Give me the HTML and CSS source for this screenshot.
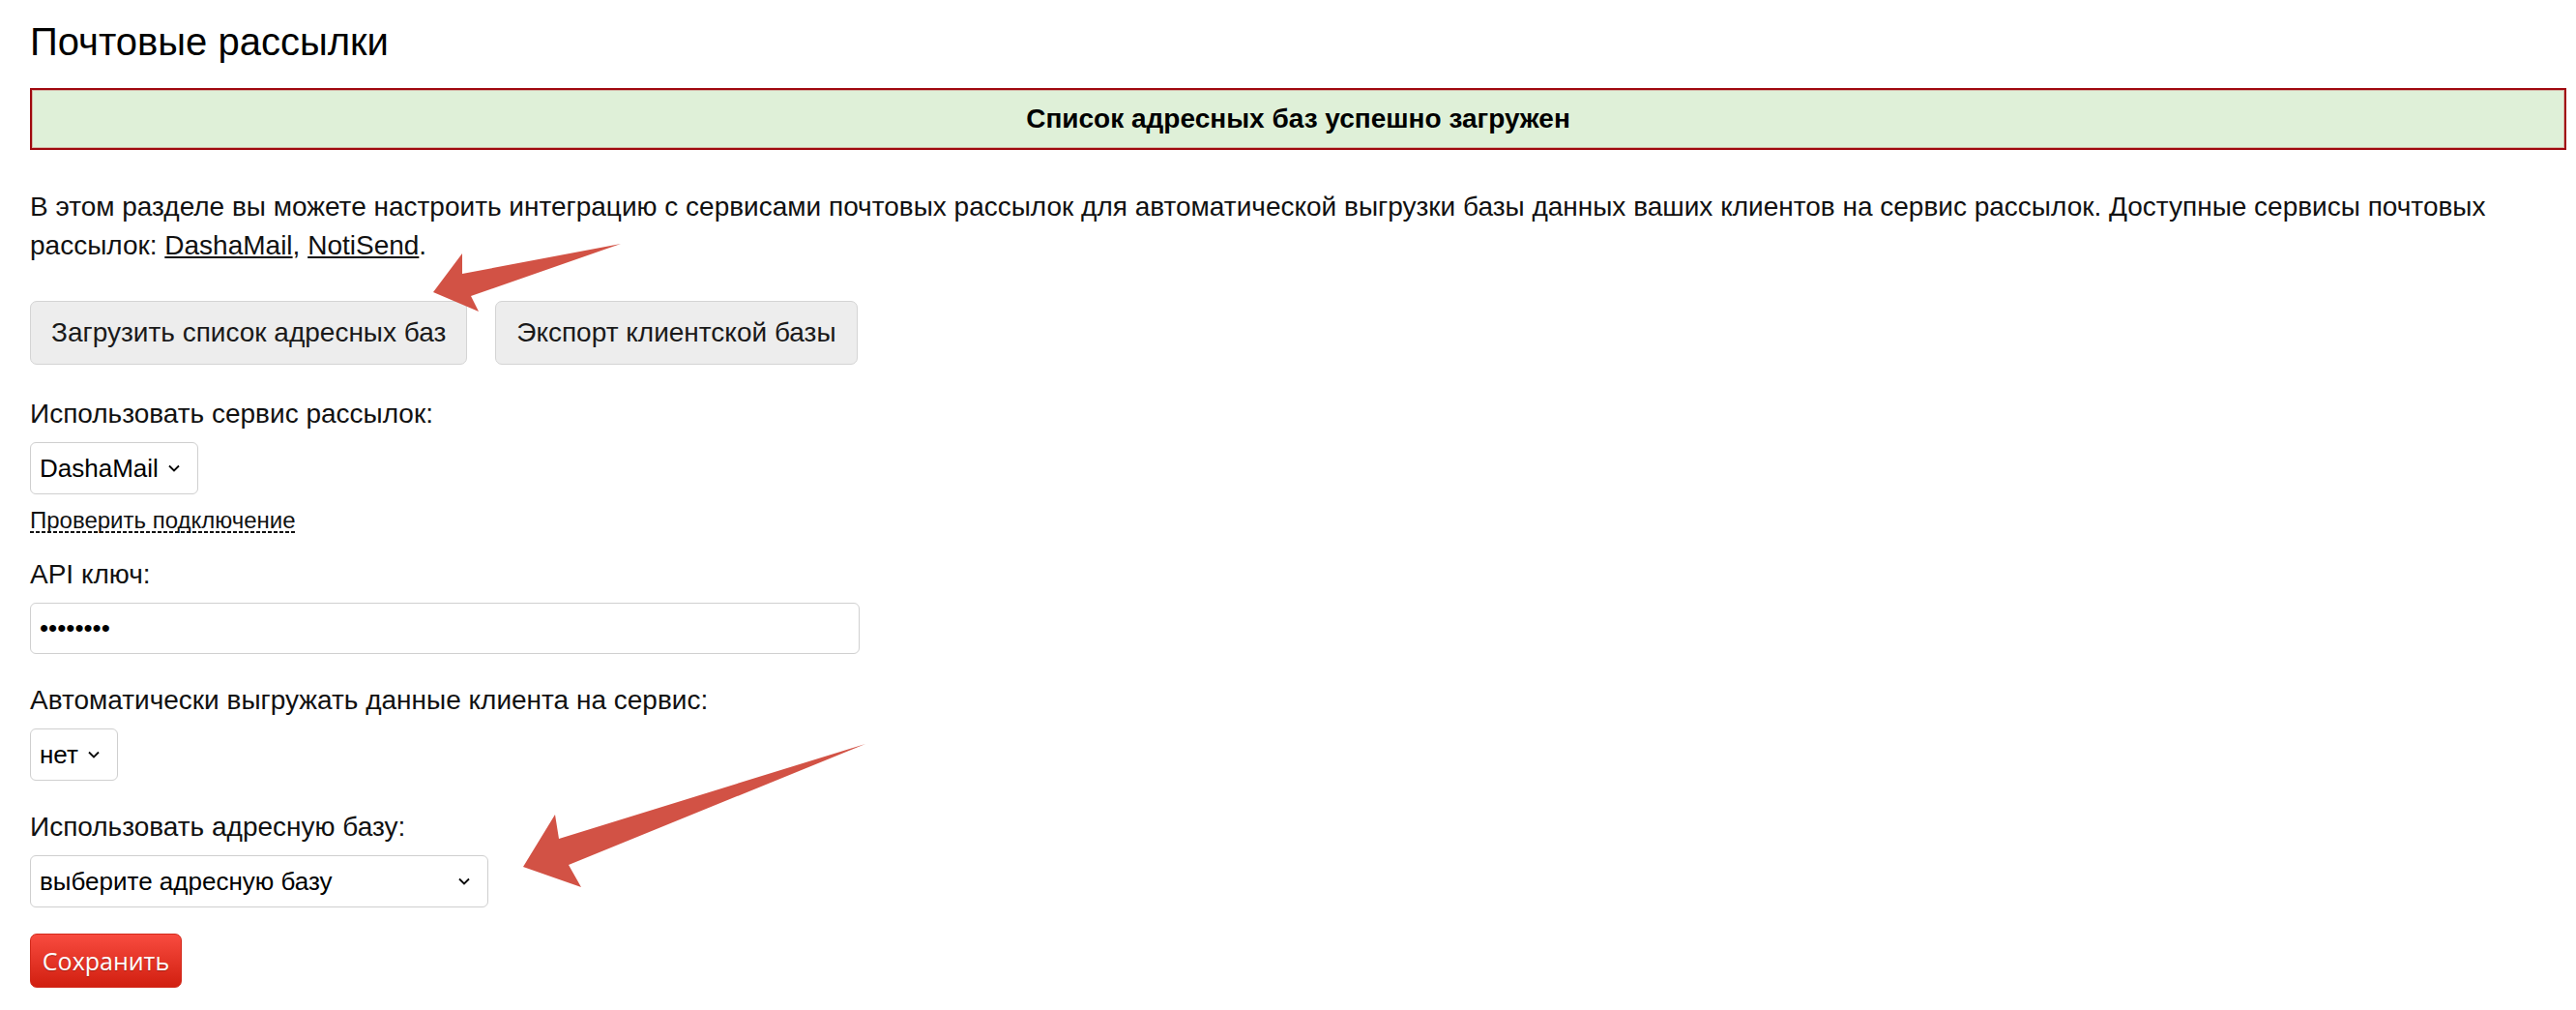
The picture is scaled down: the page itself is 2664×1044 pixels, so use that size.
FILE: index.html
```html
<!DOCTYPE html>
<html lang="ru">
  <head>
    <meta charset="UTF-8" />
    <meta name="viewport" content="width=device-width, initial-scale=1.0" />
    <title>Почтовые рассылки</title>
    <link rel="stylesheet" href="styles.css">
  </head>
  <body>
    <div class="page">
      <h1>Почтовые рассылки</h1>

      <!-- Status message -->
      <div class="notice">Список адресных баз успешно загружен</div>

      <p class="intro">
        В этом разделе вы можете настроить интеграцию с сервисами почтовых рассылок для автоматической выгрузки базы данных ваших клиентов на сервис рассылок. Доступные сервисы почтовых рассылок: <a href="#">DashaMail</a>, <a href="#">NotiSend</a>.
      </p>

      <div class="actions">
        <button class="btn">Загрузить список адресных баз</button>
        <button class="btn">Экспорт клиентской базы</button>
      </div>

      <!-- Settings form -->
      <form class="settings">
        <div class="group group-first">
          <label class="label">Использовать сервис рассылок:</label>
          <span class="select">
            <select>
              <option>DashaMail</option>
              <option>NotiSend</option>
            </select>
            <svg class="chevron" width="12" height="8" viewBox="0 0 12 8"><path d="M1 1.5l5 5 5-5" /></svg>
          </span>
          <div><a href="#" class="check-link">Проверить подключение</a></div>
        </div>

        <div class="group group-api">
          <label class="label">API ключ:</label>
          <input class="text-input" type="password" value="12345678" />
        </div>

        <div class="group">
          <label class="label">Автоматически выгружать данные клиента на сервис:</label>
          <span class="select">
            <select>
              <option>нет</option>
              <option>да</option>
            </select>
            <svg class="chevron" width="12" height="8" viewBox="0 0 12 8"><path d="M1 1.5l5 5 5-5" /></svg>
          </span>
        </div>

        <div class="group">
          <label class="label">Использовать адресную базу:</label>
          <span class="select select-wide">
            <select>
              <option>выберите адресную базу</option>
            </select>
            <svg class="chevron" width="12" height="8" viewBox="0 0 12 8"><path d="M1 1.5l5 5 5-5" /></svg>
          </span>
        </div>

        <button type="button" class="btn-save">Сохранить</button>
      </form>
    </div>

    <!-- Annotation arrows drawn over the page -->
    <svg class="arrows" width="2664" height="1044" viewBox="0 0 2664 1044">
      <polygon points="642,252 478,283 478,262 448,302 495,322 487,306" />
      <polygon points="895,769 578,867 574,842 541,896 601,917 588,894" />
    </svg>
  </body>
</html>
```

FILE: styles.css
```css
body {
  margin: 0;
  font-family: "Liberation Sans", Arial, sans-serif;
  font-size: 28px;
  color: #111;
  background: #fff;
}

.page {
  padding: 0 10px 0 31px;
}

h1 {
  margin: 21px 0 0;
  font-size: 40px;
  line-height: 44px;
  font-weight: normal;
  color: #000;
}

.notice {
  margin-top: 26px;
  height: 64px;
  box-sizing: border-box;
  display: flex;
  align-items: center;
  justify-content: center;
  background: #dff0d8;
  border: 2px solid #a0090f;
  box-shadow: inset 0 0 0 1px #d6b7a8;
  font-weight: bold;
  font-size: 28px;
  color: #000;
}

.intro {
  margin: 39px 0 0;
  line-height: 40px;
}

.intro a {
  color: #111;
}

.actions {
  display: flex;
  gap: 29px;
  margin-top: 37px;
}

.btn {
  height: 66px;
  padding: 0 21px;
  font-family: inherit;
  font-size: 28px;
  color: #1a1a1a;
  background: #ededed;
  border: 1px solid #d4d4d4;
  border-radius: 7px;
  cursor: pointer;
}

.settings {
  margin: 0;
}

.group {
  margin-top: 28px;
}

.group-first {
  margin-top: 31px;
}

.group-api {
  margin-top: 21px;
}

.label {
  display: block;
  line-height: 39px;
  margin-bottom: 10px;
}

.select {
  position: relative;
  display: inline-block;
  vertical-align: top;
}

.select select {
  appearance: none;
  -webkit-appearance: none;
  height: 54px;
  padding: 0 40px 0 9px;
  font-family: inherit;
  font-size: 26px;
  color: #000;
  background: #fff;
  border: 1px solid #cfcfcf;
  border-radius: 6px;
}

.select-wide select {
  width: 474px;
}

.chevron {
  position: absolute;
  right: 19px;
  top: 23px;
  pointer-events: none;
}

.chevron path {
  fill: none;
  stroke: #000;
  stroke-width: 1.8;
}

.check-link {
  display: inline-block;
  margin-top: 14px;
  padding-bottom: 1px;
  font-size: 24px;
  line-height: 25px;
  color: #111;
  text-decoration: none;
  background-image: linear-gradient(to right, #111 65%, transparent 0);
  background-size: 6px 2px;
  background-repeat: repeat-x;
  background-position: left bottom;
}

.text-input {
  display: block;
  width: 858px;
  height: 53px;
  box-sizing: border-box;
  padding: 0 9px;
  font-family: inherit;
  font-size: 26px;
  color: #000;
  border: 1px solid #d0d0d0;
  border-radius: 6px;
}

.btn-save {
  display: block;
  margin-top: 27px;
  width: 157px;
  height: 56px;
  font-family: "Open Sans", sans-serif;
  font-size: 25px;
  color: #fff;
  text-shadow: 0 1px 1px rgba(0, 0, 0, 0.25);
  background: linear-gradient(#f84b3f, #d11f10);
  border: 1px solid #d22a1c;
  border-radius: 7px;
  cursor: pointer;
}

.arrows {
  position: absolute;
  top: 0;
  left: 0;
  pointer-events: none;
}

.arrows polygon {
  fill: #d25245;
}
```
